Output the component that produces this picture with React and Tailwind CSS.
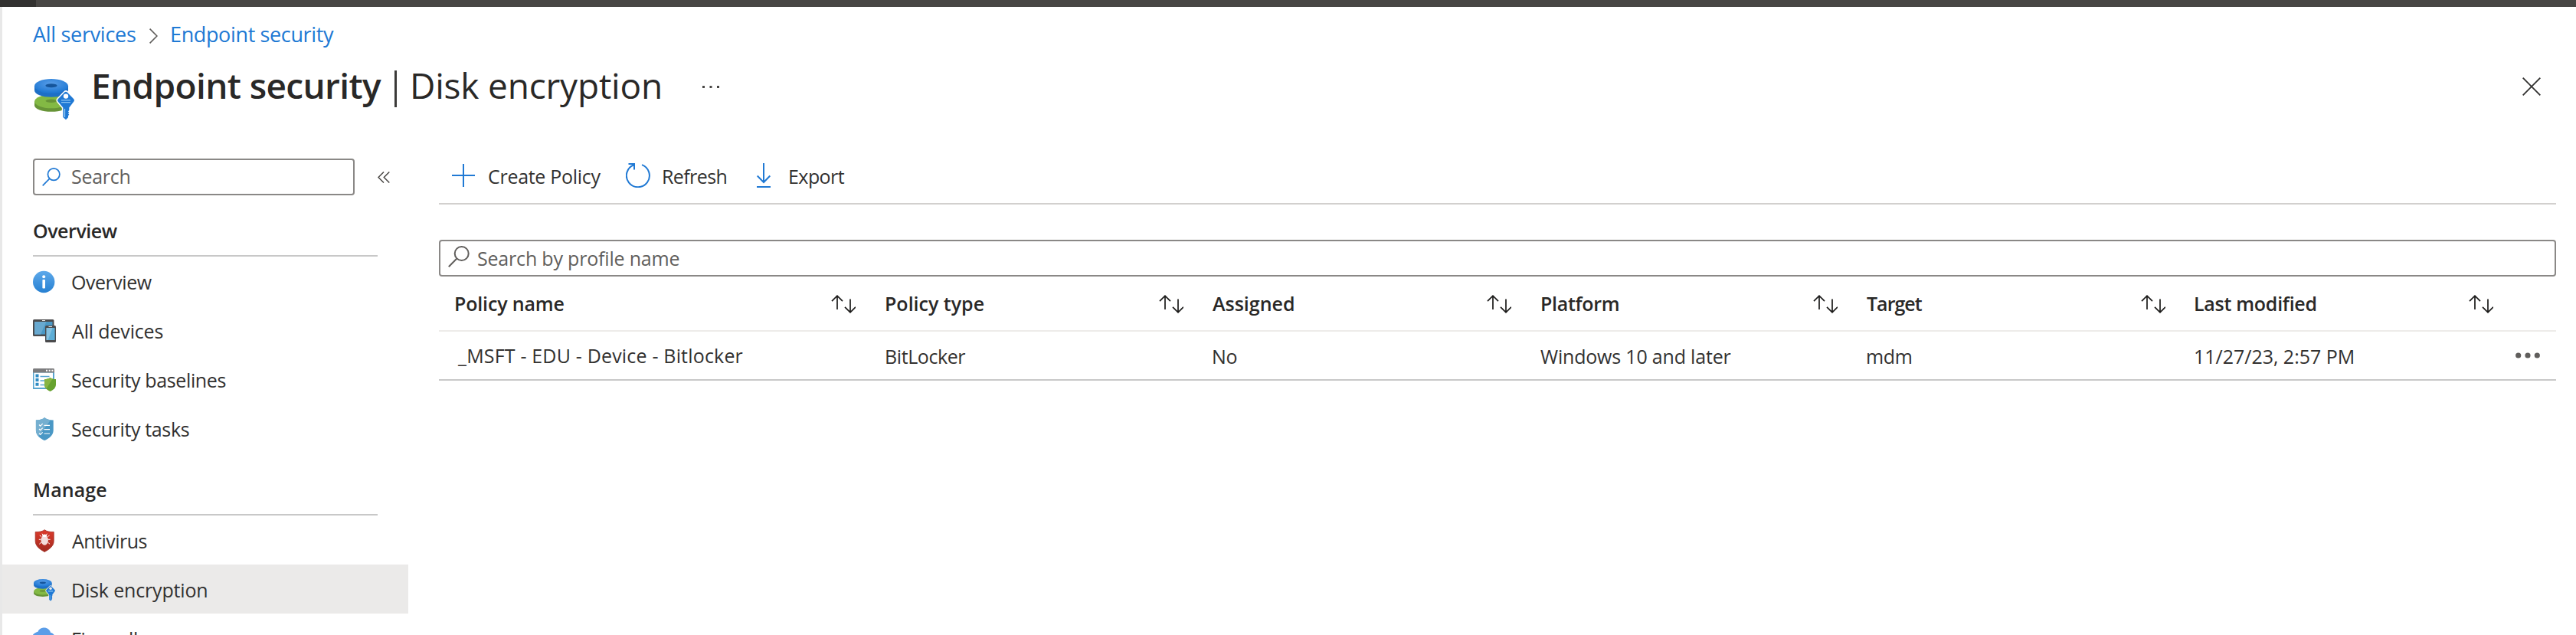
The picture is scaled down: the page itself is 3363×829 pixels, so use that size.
import React from "react";

function DiskIcon({ className, id, halo }) {
  return (
    <svg className={className} viewBox="0 0 56 56" fill="none">
      <defs>
        <radialGradient id={id} cx="0.5" cy="0.35" r="0.6">
          <stop offset="0" stopColor="#5a9ee8" />
          <stop offset="1" stopColor="#2079d4" />
        </radialGradient>
      </defs>
      <path d="M2 32v4.500c0 4.700 9.800 8.300 22 8.300s22-3.600 22-8.300V32z" fill="#679437" />
      <ellipse cx="24" cy="31.500" rx="22" ry="8.800" fill="#83b944" />
      <ellipse cx="24" cy="30.800" rx="7.500" ry="2.200" fill="#679437" />
      <path d="M2 11v6c0 5 9.800 8.800 22 8.800S46 22 46 17v-6z" fill="#1d6fc6" />
      <ellipse cx="24" cy="11.300" rx="22" ry="9.300" fill={`url(#${id})`} />
      <ellipse cx="24" cy="10.800" rx="7.600" ry="2.500" fill="#15559b" />
      <path
        d="M41.200 19.500 33 28c-1.300 1.300-1.300 2.700 0 4l6.300 7.500V52l3.700 3.200 3-3V50l1.300-1.300-1.300-1.500 1.300-1.300-1.300-1.500 1.300-1.500V39.500L53 32c1.300-1.300 1.300-2.700 0-4l-8.200-8.500a2.600 2.600 0 0 0-3.600 0z"
        fill="#2079d4"
        stroke={halo}
        strokeWidth="3"
        paintOrder="stroke"
      />
      <circle cx="43" cy="24.600" r="3.200" fill={halo} />
      <path d="M37 29.800h12M37 32.600h12" stroke="#8cc4f2" strokeWidth="1.300" />
      <path d="M41.400 41v11" stroke="#8cc4f2" strokeWidth="1.500" />
    </svg>
  );
}

const InfoIcon = () => (
  <svg className="size-[30px]" viewBox="0 0 30 30">
    <defs>
      <linearGradient id="info" x1="0" y1="0" x2="0" y2="1">
        <stop offset="0" stopColor="#5ea9ea" />
        <stop offset="1" stopColor="#2680d2" />
      </linearGradient>
    </defs>
    <circle cx="14.200" cy="15" r="14.200" fill="url(#info)" />
    <circle cx="14.200" cy="8.300" r="2" fill="#fff" />
    <rect x="12.400" y="12" width="3.600" height="11.600" rx="0.800" fill="#fff" />
  </svg>
);

const DevicesIcon = () => (
  <svg className="size-[30px]" viewBox="0 0 30 30">
    <rect x="0" y="0" width="27.500" height="22" rx="1.500" fill="#4b4b4d" />
    <rect x="2" y="3" width="23.500" height="16.500" fill="#4a98c5" />
    <path d="M2 3h15.500L10 19.500H2z" fill="#68a9d0" />
    <rect x="12" y="1" width="4" height="1" fill="#e6e6e6" />
    <rect x="16" y="8" width="14" height="22" rx="1.500" fill="#4b4b4d" />
    <rect x="17.600" y="11" width="11" height="16" fill="#5cadd6" />
    <path d="M17.600 11h8l-6 16h-2z" fill="#85c1e0" />
    <rect x="20.500" y="9" width="4.500" height="1" fill="#e6e6e6" />
  </svg>
);

const BaselinesIcon = () => (
  <svg className="size-[30px]" viewBox="0 0 30 30">
    <path d="M0 4h28v23H0z" fill="#58a5cf" />
    <path d="M1.500 5.500H26V25H1.500z" fill="#fff" />
    <path d="M0 1.500C0 .6.600 0 1.500 0h25c.9 0 1.500.6 1.500 1.500V5.500H0z" fill="#7c7c7e" />
    <path d="M17 1.800h2v2h-2zM20.700 1.800h2v2h-2zM24.400 1.800h2v2h-2z" fill="#fff" />
    <path d="M3.500 7.500h4v4h-4zM3.500 13h4v4h-4zM3.500 18.700h4v4h-4z" fill="#2f8cc4" />
    <path d="M9.500 10.500h12M9.500 16h9M9.500 21.600h7" stroke="#58a5cf" strokeWidth="1.500" />
    <path d="M22.500 12c2 1.400 4.500 2 7.500 2v7c0 4.500-4 7.500-7.500 9-3.500-1.500-7.500-4.500-7.500-9v-7c3 0 5.500-.6 7.500-2z" fill="#66a22f" />
    <path d="M22.500 12c1 .7 2 1.200 3.200 1.500L17.500 26.500c-1.500-1.500-2.500-3.300-2.500-5.500v-7c3 0 5.500-.6 7.500-2z" fill="#87b442" />
  </svg>
);

const TasksIcon = () => (
  <svg className="size-[30px]" viewBox="0 0 30 30">
    <path d="M15.200 0c2 2.300 6 3.300 11.500 3.500V17c0 6.500-6.500 11-11.500 13C10.200 28 3.900 23.500 3.900 17V3.500C9.400 3.300 13.200 2.300 15.200 0z" fill="#4a98c5" />
    <path d="M15.200 0c1.600 1.900 4.300 2.900 8 3.300L7.500 24.300C5.400 22.300 3.900 20 3.900 17V3.500C9.400 3.300 13.200 2.300 15.200 0z" fill="#75afd0" />
    <path d="m8 9.500 1.700 1.700 3-3M8 15l1.700 1.700 3-3M8 20.600l1.700 1.700 3-3M14.500 10.300H22M14.500 15.700H22M14.500 21H22" stroke="#fff" strokeWidth="1.200" fill="none" />
  </svg>
);

const AntivirusIcon = () => (
  <svg className="size-[30px]" viewBox="0 0 30 30">
    <defs>
      <linearGradient id="av" x1="0" y1="0" x2="0" y2="1">
        <stop offset="0" stopColor="#dd3b2c" />
        <stop offset="1" stopColor="#a02a20" />
      </linearGradient>
    </defs>
    <path d="M15.200.7c2.500 2 6.500 3 12 2.700V15.500c0 6.700-6.500 11-12 14-5.500-3-12-7.300-12-14V3.400C8.700 3.700 12.700 2.700 15.200.7z" fill="url(#av)" stroke="#a02a20" strokeWidth="0.800" />
    <path d="M11 9.500 8.800 8M19.400 9.500 21.600 8M10.500 13.300H7.800M19.900 13.300h2.700M11 17l-2.700 2.300M19.400 17l2.700 2.300M13 7.500 12 5.700M17.400 7.500l1-1.800" stroke="#fff" strokeWidth="1" />
    <ellipse cx="15.200" cy="14.200" rx="4.700" ry="6.500" fill="#f3dddb" />
    <ellipse cx="15.200" cy="8.300" rx="3" ry="1.800" fill="#fff" />
  </svg>
);

const FirewallIcon = () => (
  <svg className="size-[30px]" viewBox="0 0 30 30">
    <path d="M7 19.500a6.500 6.500 0 0 1-4.500-12C3.500 6.600 5 6 6.300 6 7.500 2.600 10.800.5 14.500.5c4.200 0 7.600 2.700 8.600 6.400 3 .3 5.400 3 5.400 6.200 0 3.500-2.800 6.400-6.300 6.400z" fill="#5b9de8" />
  </svg>
);

function SearchGlyph({ className }) {
  return (
    <svg className={className} viewBox="0 0 28 28" fill="none" stroke="currentColor" strokeWidth="2">
      <circle cx="17.700" cy="10" r="9" />
      <path d="M11.400 16.500.8 27.200" />
    </svg>
  );
}

const SortIcon = () => (
  <svg className="mt-0.5 h-6 w-8 text-[#1b1a19]" viewBox="0 0 32 24" fill="none" stroke="currentColor" strokeWidth="1.700">
    <path d="M8 19V1.200M1 8.200l7-7 7 7M25 5.500v17.300M18 15.800l7 7 7-7" />
  </svg>
);

function NavItem({ icon, label, tracking, active }) {
  return (
    <div className={`flex h-16 shrink-0 items-center gap-5 pl-10 pt-[2px] ${active ? "bg-[#ebeae9]" : ""}`}>
      {icon}
      <span className={`pt-[2px] ${tracking}`}>{label}</span>
    </div>
  );
}

const columns = [
  { label: "Policy name", tracking: "tracking-[-0.16px] pl-px" },
  { label: "Policy type", tracking: "tracking-[0px] pl-px" },
  { label: "Assigned", tracking: "tracking-[0px] pl-px" },
  { label: "Platform", tracking: "tracking-[-0.29px] pl-px" },
  { label: "Target", tracking: "tracking-[-1px] pl-px" },
  { label: "Last modified", tracking: "tracking-[-0.27px]" },
];

const cells = [
  { label: "_MSFT - EDU - Device - Bitlocker", tracking: "tracking-[0.18px] pl-[6px] pb-[2px]" },
  { label: "BitLocker", tracking: "tracking-[-0.41px] pl-px" },
  { label: "No", tracking: "tracking-[-0.3px]" },
  { label: "Windows 10 and later", tracking: "tracking-[-0.19px] pl-px" },
  { label: "mdm", tracking: "tracking-[-0.3px]" },
  { label: "11/27/23, 2:57 PM", tracking: "tracking-[-0.02px]" },
];

const grid = "grid grid-cols-[562px_428px_428px_426px_428px_428px_64px] items-center";

export default function App() {
  return (
    <div className="flex h-[829px] w-[3363px] flex-col overflow-hidden whitespace-nowrap bg-white font-['Open_Sans',sans-serif] text-[25px] text-[#323130]">
      <div className="flex h-[9px] shrink-0 bg-[#484644]">
        <div className="w-[47px] bg-[#323130]" />
      </div>
      <div className="flex min-h-0 flex-1 flex-col border-l-[3px] border-[#e8e8e8]">
        <nav className="flex h-[71px] shrink-0 items-center pl-10 pt-px text-[27px] text-[#2079d4]">
          <a className="w-[152px] tracking-[-0.3px]">All services</a>
          <svg className="mt-[3px] h-5 w-[11px] text-[#605e5c]" viewBox="0 0 11 20" fill="none" stroke="currentColor" strokeWidth="1.600">
            <path d="m.6.6 9.300 9.400L.6 19.400" />
          </svg>
          <a className="ml-4 tracking-[-0.37px]">Endpoint security</a>
        </nav>

        <header className="flex h-[127px] shrink-0 pl-10 text-[46px] text-[#292827]">
          <DiskIcon className="mt-[21px] size-[56px]" id="disk-lg" halo="#ffffff" />
          <div className="ml-5 flex h-[62px] items-center">
            <h1 className="w-[391px] font-semibold tracking-[-0.64px]">Endpoint security</h1>
            <div className="ml-[5px] mt-[10px] h-12 w-[3px] bg-[#3b3a39]" />
            <span className="ml-[17px] w-[382px] tracking-[-0.2px]">Disk encryption</span>
            <svg className="mt-1 h-[3px] w-[22px]" viewBox="0 0 22 3" fill="#484644">
              <path d="M0 0h3v3H0zM9.500 0h3v3h-3zM19 0h3v3h-3z" />
            </svg>
          </div>
          <svg className="ml-auto mr-[46px] mt-[21px] size-6" viewBox="0 0 24 24" stroke="#323130" strokeWidth="1.900">
            <path d="m.7.7 22.600 22.600M23.300.7.700 23.300" />
          </svg>
        </header>

        <div className="flex min-h-0 flex-1">
          <aside className="flex w-[530px] shrink-0 flex-col">
            <div className="flex items-center pl-10">
              <div className="flex h-12 w-[420px] items-center rounded-[4px] border-2 border-[#8a8886] pl-[10px] text-[#605e5c]">
                <SearchGlyph className="size-6 text-[#2079d4]" />
                <span className="ml-[14px] tracking-[-0.26px]">Search</span>
              </div>
              <svg className="ml-[30px] h-[15px] w-4" viewBox="0 0 16 15" fill="none" stroke="#484644" strokeWidth="1.500">
                <path d="M8 .5 1 7.500l7 7M15.300.5l-7 7 7 7" />
              </svg>
            </div>
            <h2 className="ml-10 flex h-20 w-[450px] shrink-0 items-center border-b-2 border-[#c8c8c8] pt-[16px] font-semibold tracking-[-0.46px] text-[#292827]">
              Overview
            </h2>
            <NavItem icon={<InfoIcon />} label="Overview" tracking="tracking-[-0.47px]" />
            <NavItem icon={<DevicesIcon />} label="All devices" tracking="tracking-[-0.16px] pl-px" />
            <NavItem icon={<BaselinesIcon />} label="Security baselines" tracking="tracking-[-0.36px]" />
            <NavItem icon={<TasksIcon />} label="Security tasks" tracking="tracking-[-0.36px]" />
            <h2 className="ml-10 flex h-[82px] w-[450px] shrink-0 items-center border-b-2 border-[#c8c8c8] pt-[18px] font-semibold tracking-[0.1px] text-[#292827]">
              Manage
            </h2>
            <NavItem icon={<AntivirusIcon />} label="Antivirus" tracking="tracking-[-0.52px] pl-px" />
            <NavItem
              active
              icon={<DiskIcon className="size-[30px]" id="disk-sm" halo="#ebeae9" />}
              label="Disk encryption"
              tracking="tracking-[-0.17px]"
            />
            <NavItem icon={<FirewallIcon />} label="Firewall" tracking="tracking-[-0.3px]" />
          </aside>

          <main className="ml-10 w-[2764px] shrink-0">
            <div className="flex h-[60px] items-center border-b-2 border-[#d2d0ce] pb-[12px]">
              <div className="flex w-[244px] items-center pl-[17px]">
                <svg className="mb-0.5 size-[30px]" viewBox="0 0 30 30" stroke="#2079d4" strokeWidth="2">
                  <path d="M15 0v30M0 15h30" />
                </svg>
                <span className="ml-[17px] pt-px tracking-[-0.29px]">Create Policy</span>
              </div>
              <div className="flex w-[171px] items-center">
                <svg className="mb-0.5 h-8 w-8" viewBox="0 0 32 32" fill="none" stroke="#2079d4" strokeWidth="2">
                  <path d="M21 2.100A15 15 0 1 1 10.500 2.200M3.500 1.100H11V8.500" />
                </svg>
                <span className="ml-[15px] pt-px tracking-[-0.6px]">Refresh</span>
              </div>
              <div className="flex items-center">
                <svg className="mb-0.5 h-8 w-[18px]" viewBox="0 0 18 32" fill="none" stroke="#2079d4" strokeWidth="2">
                  <path d="M9 0v25M.7 16.500 9 25l8.300-8.500M0 31h18" />
                </svg>
                <span className="ml-[23px] pt-px tracking-[-0.55px]">Export</span>
              </div>
            </div>

            <div className="mt-[46px] flex h-12 items-center rounded-[4px] border-2 border-[#8a8886] pl-[10px] text-[#605e5c]">
              <SearchGlyph className="mb-1 size-[28px] text-[#605e5c]" />
              <span className="ml-[10px] pt-px tracking-[-0.19px]">Search by profile name</span>
            </div>

            <div className={`${grid} h-[72px] border-b-2 border-[#edebe9] font-semibold text-[#292827]`}>
              {columns.map((c) => (
                <div key={c.label} className="flex items-center justify-between pl-[19px] pr-[18px]">
                  <span className={`pt-px ${c.tracking}`}>{c.label}</span>
                  <SortIcon />
                </div>
              ))}
            </div>

            <div className={`${grid} h-[64px] border-b-2 border-[#c8c8c8] pt-[4px]`}>
              {cells.map((c) => (
                <div key={c.label} className="flex pl-[19px]">
                  <span className={c.tracking}>{c.label}</span>
                </div>
              ))}
              <svg className="mb-[5px] ml-[11px] h-2 w-8" viewBox="0 0 32 8" fill="#605e5c">
                <circle cx="3.700" cy="4" r="3.600" />
                <circle cx="16" cy="4" r="3.600" />
                <circle cx="28.300" cy="4" r="3.600" />
              </svg>
            </div>
          </main>
        </div>
      </div>
    </div>
  );
}
